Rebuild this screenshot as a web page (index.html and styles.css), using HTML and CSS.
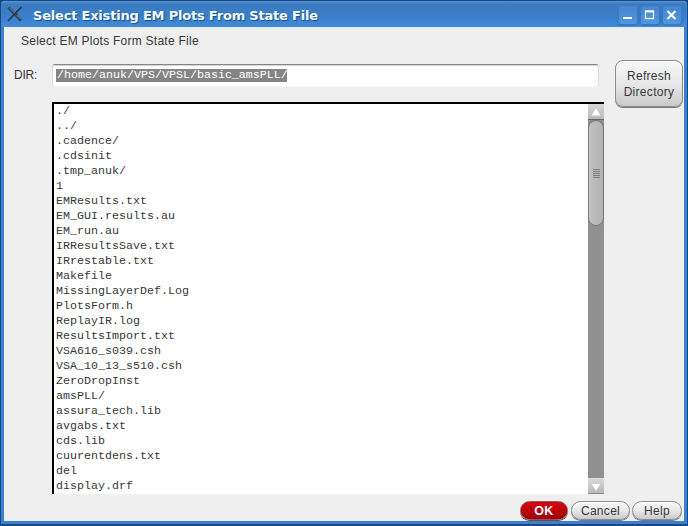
FILE: index.html
```html
<!DOCTYPE html>
<html lang="en">
<head>
<meta charset="utf-8">
<title>Select Existing EM Plots From State File</title>
<link rel="stylesheet" href="styles.css">
</head>
<body>
<div class="window">
  <header class="titlebar">
    <svg class="logo" width="18" height="18" viewBox="0 0 18 18">
      <path d="M2.5 2.5 15 15.5" stroke="#29435c" stroke-width="3"/>
      <path d="M15.5 2 2 16" stroke="#26394c" stroke-width="1.8"/>
      <path d="M3.5 2.8 14.5 14" stroke="#71899a" stroke-width="1"/>
      <path d="M9 8 11 10" stroke="#403a35" stroke-width="2"/>
    </svg>
    <h1>Select Existing EM Plots From State File</h1>
    <div class="controls">
      <span class="control"><svg width="20" height="20"><path d="M5 13h9" stroke="#f4ffff" stroke-width="2"/></svg></span>
      <span class="control"><svg width="20" height="20"><path d="M5.5 6.5h8v7h-8z" fill="none" stroke="#e4f7ff" stroke-width="1.3"/><path d="M5 6.3h9" stroke="#f4ffff" stroke-width="2"/></svg></span>
      <span class="control"><svg width="20" height="20"><path d="M5.5 6l8 8M13.5 6l-8 8" stroke="#f4ffff" stroke-width="2.2"/></svg></span>
    </div>
  </header>
  <main class="content">
    <p class="heading">Select EM Plots Form State File</p>
    <div class="form">
      <div class="fields">
        <div class="dir">
          <span class="label">DIR:</span>
          <div class="input"><span class="selected">/home/anuk/VPS/VPSL/basic_amsPLL/</span></div>
        </div>
        <div class="list">
          <ul>
            <li>./</li><li>../</li><li>.cadence/</li><li>.cdsinit</li><li>.tmp_anuk/</li><li>1</li>
            <li>EMResults.txt</li><li>EM_GUI.results.au</li><li>EM_run.au</li><li>IRResultsSave.txt</li>
            <li>IRrestable.txt</li><li>Makefile</li><li>MissingLayerDef.Log</li><li>PlotsForm.h</li>
            <li>ReplayIR.log</li><li>ResultsImport.txt</li><li>VSA616_s039.csh</li><li>VSA_10_13_s510.csh</li>
            <li>ZeroDropInst</li><li>amsPLL/</li><li>assura_tech.lib</li><li>avgabs.txt</li><li>cds.lib</li>
            <li>cuurentdens.txt</li><li>del</li><li>display.drf</li>
          </ul>
          <div class="scrollbar">
            <span class="arrow up"><svg width="16" height="15"><path d="M8 4.5 12.5 11.5h-9z" fill="#fff"/></svg></span>
            <div class="track"><div class="thumb"><i></i><i></i><i></i><i></i><i></i></div></div>
            <span class="arrow down"><svg width="16" height="15"><path d="M8 12 3.8 5h8.4z" fill="#fff"/></svg></span>
          </div>
        </div>
      </div>
      <div class="button refresh">Refresh<br>Directory</div>
    </div>
    <footer class="actions">
      <div class="button ok">OK</div>
      <div class="button cancel">Cancel</div>
      <div class="button help">Help</div>
    </footer>
  </main>
</div>
</body>
</html>
```
FILE: styles.css
```css
* { box-sizing: border-box; }
body { margin: 0; background: #173c63; overflow: hidden; }
svg { display: block; }
.window {
  width: 688px; height: 526px; padding: 0 3px 3px;
  background: #3a80cd;
  border: 1px solid #174a82; border-bottom-width: 2px;
  border-radius: 4px 4px 0 0;
  display: flex; flex-direction: column;
  font: 12px/16px "Liberation Sans", sans-serif; color: #383838;
}
.titlebar {
  height: 26px; flex: none; display: flex; align-items: center;
  margin: 0 -3px; padding: 2px 5px 0 5px;
  background: linear-gradient(#5693d2 0, #3b7bc1 3px, #3a7ec8 14px, #438ad8 100%);
  border-radius: 3px 3px 0 0;
}
.logo { margin-top: -3px; }
h1 {
  margin: 2px 0 0 9px; flex: 1; white-space: nowrap;
  font: bold 13px/18px "DejaVu Sans", sans-serif; letter-spacing: -0.2px;
  color: #f0fcff; text-shadow: 1px 1px 1px #1d4c86;
}
.controls { display: flex; gap: 2px; }
.control {
  width: 20px; height: 20px; border-radius: 3px;
  background: linear-gradient(#4585ce, #5196e0); box-shadow: inset 0 0 0 1px #3b79bf, 0 0 0 1px #387ac2;
}
.content {
  flex: 1; min-height: 0; background: #efefef; border-top: 1px solid #d9f0fc;
  display: flex; flex-direction: column;
}
.heading { margin: 5px 0 0 17px; letter-spacing: 0.25px; }
.form { display: flex; gap: 11px; margin-top: 11px; padding-left: 10px; }
.fields { width: 590px; padding-top: 4px; }
.dir { display: flex; align-items: flex-start; padding-right: 5px; }
.label { width: 38px; padding-top: 3px; letter-spacing: -0.2px; }
.input {
  flex: 1; height: 23px; padding: 4px 3px 0 4px; background: #fff;
  border: 1px solid #ddd; border-top: 1px solid #858585; border-bottom-color: #f7f7f7; border-radius: 3px;
  box-shadow: inset 0 1px #d7d7d7;
}
.selected {
  display: block; width: 231px; height: 13px; line-height: 13px; margin-left: -1px; padding-left: 1px;
  background: #858585; color: #fff;
}
.selected, .list { font-family: "Liberation Mono", monospace; font-size: 11.667px; white-space: nowrap; }
.list {
  height: 392px; margin: 15px 0 0 38px; display: flex;
  background: #fff; border: solid #000; border-width: 2px 0 0 2px;
}
ul { flex: 1; margin: 0; padding: 0 0 0 2px; list-style: none; }
li { height: 15px; line-height: 15px; }
.scrollbar { width: 16px; height: 390px; display: flex; flex-direction: column; background: #909090; }
.arrow { height: 16px; flex: none; background: linear-gradient(#d8d8d8, #b9b9b9); border-bottom: 1px solid #656565; }
.down { border-top: 1px solid #ddd; border-bottom-color: #888; }
.track { flex: 1; }
.thumb {
  height: 106px; border: 1px solid #777; border-radius: 8px;
  background: linear-gradient(90deg, #c9c9c9, #bcbcbc 25%, #b4b4b4);
  display: flex; flex-direction: column; align-items: center; justify-content: center; gap: 1px;
}
.thumb i { width: 7px; height: 1px; background: #7d7d7d; }
.button {
  display: flex; align-items: center; justify-content: center; text-align: center;
  border: 1px solid #8c8c8c; box-shadow: 0 1px #777, inset 0 1px #fff;
  background: linear-gradient(#f8f8f8, #e8e8e8 50%, #cacaca);
  letter-spacing: 0.3px;
}
.refresh { width: 68px; height: 47px; flex: none; border-radius: 8px; }
.actions { display: flex; gap: 2px; justify-content: flex-end; padding: 7px 2px 0 0; }
.actions .button { height: 19px; border-radius: 10px; }
.actions .ok {
  width: 48px; margin-right: 1px; color: #fff; font-weight: bold; font-size: 12.5px;
  background: linear-gradient(#d40712, #b90009 60%, #9c0007);
  border-color: #98555a; box-shadow: 0 1px #76434a;
}
.cancel { width: 59px; }
.help { width: 50px; }
```
